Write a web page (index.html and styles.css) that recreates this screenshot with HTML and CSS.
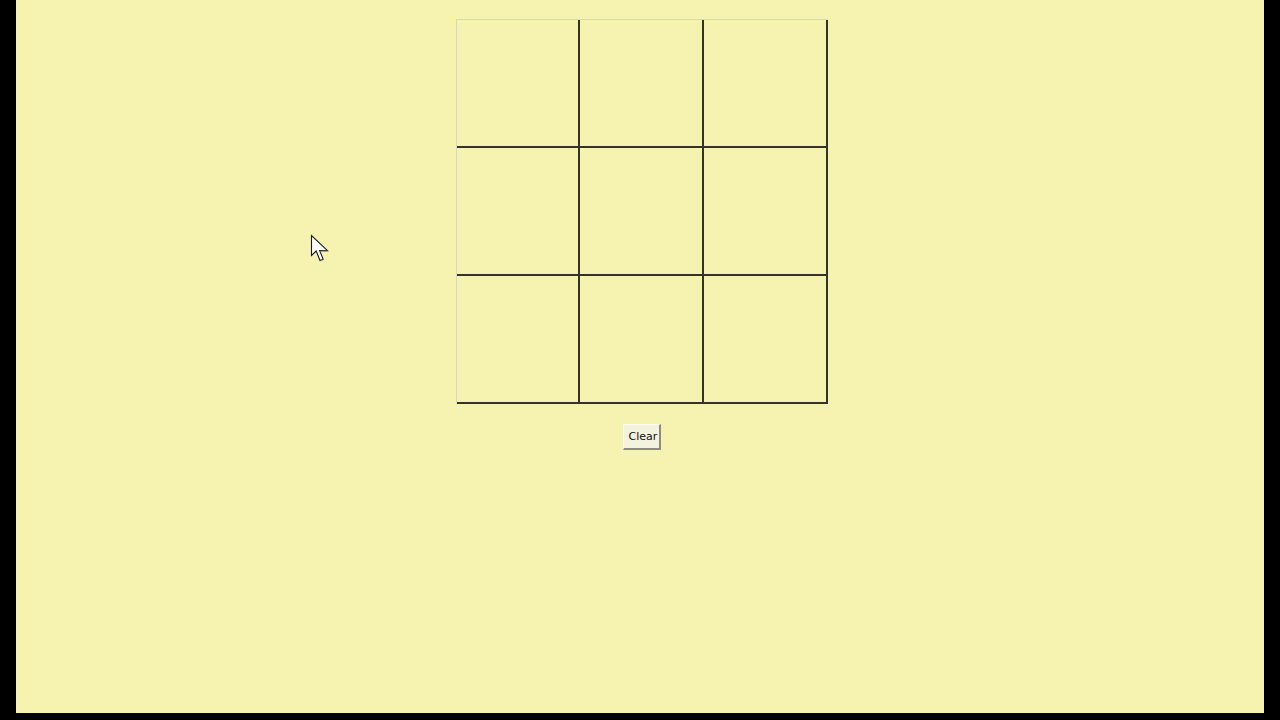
FILE: index.html
```html
<!DOCTYPE html>
<html>
<head>
<meta charset="utf-8">
<link rel="stylesheet" href="styles.css">
</head>
<body>
<div class="frame">
  <main class="stage">
    <div class="board">
      <div class="cell"></div><div class="cell"></div><div class="cell"></div>
      <div class="cell"></div><div class="cell"></div><div class="cell"></div>
      <div class="cell"></div><div class="cell"></div><div class="cell"></div>
    </div>
    <button class="clear">Clear</button>
    <svg class="cursor" width="22" height="30" viewBox="0 0 22 30">
      <path d="M1.5 1.5 L1.5 21.5 L6.2 17 L10 26.5 L13.2 25.2 L9.6 16.6 L17.5 16.6 Z" fill="#ffffff" stroke="#1a1a1a" stroke-width="1.1" stroke-linejoin="miter"/>
      <path d="M13.8 25.6 L10.6 26.9 M18 17.2 L10.4 17.2" stroke="#9a9a8a" stroke-width="0.8" fill="none"/>
    </svg>
  </main>
</div>
</body>
</html>
```
FILE: styles.css
```css
html, body {
  margin: 0;
  padding: 0;
  background: #000;
  width: 1280px;
  height: 720px;
  overflow: hidden;
}
.frame {
  display: flex;
  padding: 0 16px 7px 16px;
  height: 720px;
  box-sizing: border-box;
}
.stage {
  position: relative;
  flex: 1;
  background: #f5f3af;
  display: flex;
  flex-direction: column;
  align-items: center;
  padding-top: 19px;
  padding-left: 3px;
  font-family: Tahoma, "DejaVu Sans", "Liberation Sans", sans-serif;
}
.board {
  display: grid;
  grid-template-columns: 123px 124px 124px;
  grid-template-rows: 128px 128px 128px;
  border-top: 1px solid #d6d6cc;
  border-left: 1px solid #d6d6cc;
}
.cell {
  box-sizing: border-box;
  border-right: 2px solid #333326;
  border-bottom: 2px solid #333326;
}
.clear {
  margin-top: 20px;
  height: 26px;
  padding: 0 5px;
  font-family: "DejaVu Sans", "Liberation Sans", sans-serif;
  font-size: 11px;
  color: #111;
  background: #f4f3e0;
  border: none;
  border-right: 2px solid #8c8c80;
  border-bottom: 2px solid #8c8c80;
  border-top: 1px solid #fffff4;
  border-left: 1px solid #fffff4;
  box-sizing: border-box;
  width: 38px;
}
.cursor {
  position: absolute;
  left: 294px;
  top: 234px;
}
```
